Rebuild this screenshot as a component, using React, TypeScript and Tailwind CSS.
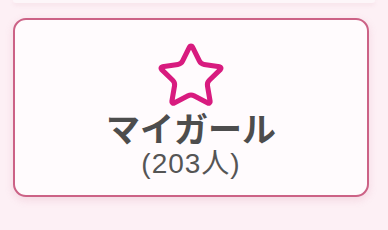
import { Star } from "lucide-react";

// Favourite-list tile: big outlined star over the list name and member count.

export default function App() {
  return (
    <div className="h-[230px] w-[388px] overflow-hidden bg-[#fdf0f5] font-['Liberation_Sans','Noto_Sans_CJK_JP',sans-serif]">
      {/* bottom edge of the tile above */}
      <div className="mx-[13px] h-[3px] rounded-b-xl bg-[#fdf6f9] shadow-[0_2px_4px_rgba(200,120,150,0.15)]" />

      <div className="ml-[13px] mt-[15px] flex h-[179px] w-[356px] flex-col items-center rounded-[13px] border-2 border-[#cc6286] bg-[#fffbfd] shadow-[0_3px_8px_rgba(200,100,140,0.18)]">
        <Star size={72} strokeWidth={1.7} className="mt-[20px] shrink-0 text-[#d81b7f]" />
        <div className="-mt-[1px] text-[34px] font-bold leading-[38px] text-[#4d4d4d]">マイガール</div>
        <div className="text-[28px] leading-[30px] tracking-[1px] text-[#555]">(203人)</div>
      </div>
    </div>
  );
}
